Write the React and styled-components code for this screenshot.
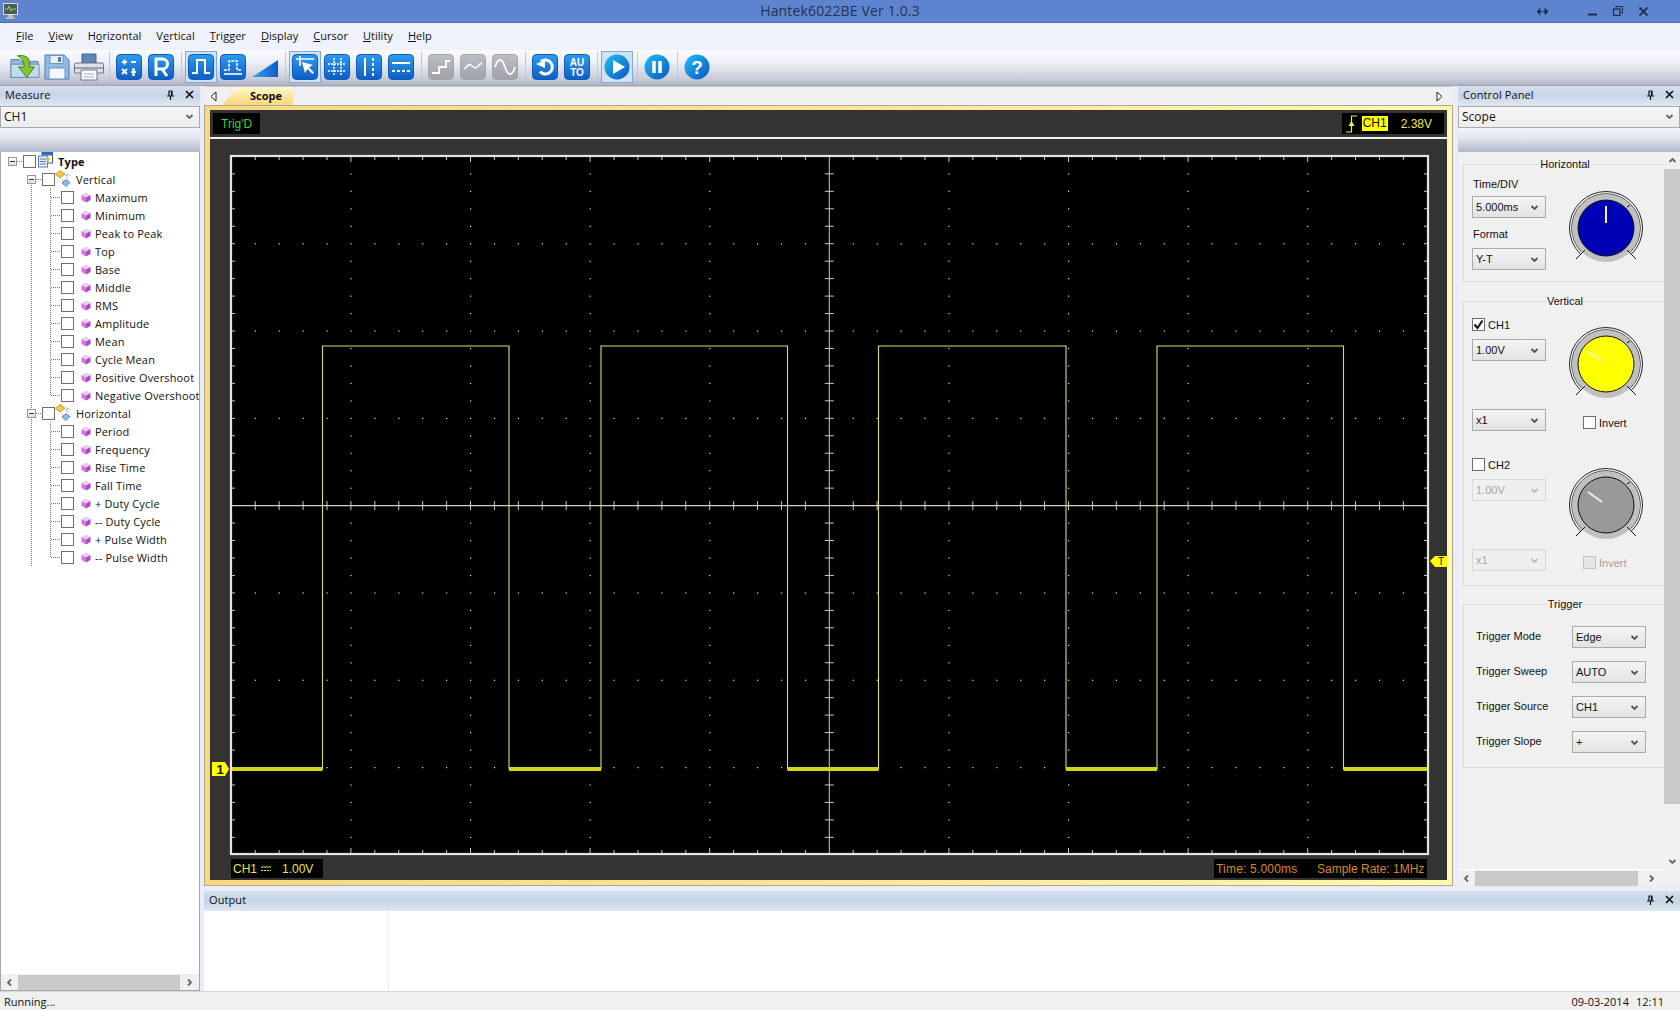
import React from "react";
import styled, { createGlobalStyle } from "styled-components";

const UI = `"Open Sans", "Liberation Sans", sans-serif`;
const ARIAL = `"Liberation Sans", Arial, sans-serif`;

const Global = createGlobalStyle`
  html, body { margin: 0; padding: 0; background: #e9edf9; }
  * { box-sizing: border-box; }
`;

const Window = styled.div`
  width: 1680px; height: 1010px; display: flex; flex-direction: column; overflow: hidden;
  font-family: ${UI}; font-size: 11px; color: #111; background: #e9edf9;
`;
const TitleBar = styled.div`
  height: 23px; flex: none; background: #5e83cf; border-bottom: 1px solid #4f6ea8;
  display: grid; grid-template-columns: 1fr auto 1fr; align-items: center;
`;
const AppIcon = styled.div` padding-left: 3px; display: flex; align-items: center; `;
const Title = styled.div` font-size: 14px; color: #26344f; line-height: 22px; letter-spacing: 0.15px; `;
const WinControls = styled.div`
  display: flex; justify-content: flex-end; align-items: center; padding-right: 32px; gap: 16px; color: #1d2c4a;
`;
const ResizeIcon = styled.span` margin-right: 24px; display: flex; `;

const MenuBar = styled.nav`
  height: 27px; flex: none; background: #f0f2fb; display: flex; align-items: center; padding: 0 0 3px 16px; gap: 15px;
`;
const MenuItem = styled.span`
  font-size: 11px; color: #111; letter-spacing: 0.03px;
  u { text-underline-offset: 1px; }
`;
const Toolbar = styled.div`
  height: 36px; flex: none; display: flex; align-items: center; padding: 0 0 2px 9px;
  background: linear-gradient(#fbfbfe 0%, #eef0f7 35%, #c6c8d6 85%, #b0b3c5 100%);
  border-bottom: 1px solid #a3a5b4;
`;
const ToolBtn = styled.div`
  width: 32px; height: 32px; display: flex; align-items: center; justify-content: center;
  border: 1px solid ${(p) => (p.$active ? "#7fa9d9" : "transparent")};
  background: ${(p) => (p.$active ? "#cfe2f7" : "transparent")};
`;
const ToolSep = styled.div`
  width: 1px; height: 30px; margin: 0 3.5px 0 3.5px; background: #c4c6d2;
`;

const Main = styled.div` flex: 1; min-height: 0; display: flex; `;
const SidePanel = styled.aside`
  width: ${(p) => p.$w}px; flex: none; display: flex; flex-direction: column;
`;
const PanelHeader = styled.div`
  height: 20px; flex: none; display: flex; align-items: center; justify-content: space-between;
  padding: 0 6px 3px 5px; font-size: 11px; color: #111;
  background: linear-gradient(#d5dfed 0%, #c6d4e6 45%, #dfe7f2 100%);
`;
const PanelTitle = styled.span` letter-spacing: 0.1px; `;
const PanelTools = styled.span` display: flex; align-items: center; gap: 10px; `;
const PanelCombo = styled.div`
  height: 22px; flex: none; border: 1px solid #a9a9a9; display: flex; align-items: center; justify-content: space-between;
  padding: 0 5px 2px 3px; font-size: 12px; background: linear-gradient(#f6f6f6, #ececec);
`;
const Band = styled.div`
  height: 24px; flex: none; background: linear-gradient(#f3f4fb 0%, #e4e6f0 40%, #b4b7ca 100%);
`;
const TreeBox = styled.div`
  flex: 1; min-height: 0; background: #fff; border-left: 1px solid #a6a6a6; border-right: 1px solid #a6a6a6;
  overflow: hidden;
`;
const TreeGroup = styled.div`
  background-image: repeating-linear-gradient(to bottom, #777 0 1px, transparent 1px 2px);
  background-repeat: no-repeat; background-size: 1px ${(p) => p.$end}px; background-position: 30px 9px;
`;
const TreeChildren = styled.div`
  background-image: repeating-linear-gradient(to bottom, #777 0 1px, transparent 1px 2px);
  background-repeat: no-repeat; background-size: 1px calc(100% - 9px); background-position: 49px 0;
`;
const TreeRow = styled.div`
  height: 18px; display: flex; align-items: center; padding-left: ${(p) => p.$indent}px; white-space: nowrap;
`;
const Expander = styled.span`
  width: 9px; height: 9px; border: 1px solid #999; display: flex; align-items: center; justify-content: center;
  background: linear-gradient(#fff, #ddd); flex: none;
  &::before { content: ""; width: 5px; height: 1px; background: #333; }
`;
const Stub = styled.span`
  width: ${(p) => p.$w}px; height: 1px; flex: none;
  background: repeating-linear-gradient(to right, #777 0 1px, transparent 1px 2px);
`;
const CheckBox = styled.span`
  width: 13px; height: 13px; flex: none; border: 1px solid ${(p) => (p.$disabled ? "#c2c2c2" : "#6f6f6f")};
  background: ${(p) => (p.$disabled ? "#e6e6e6" : "#fff")};
  display: inline-flex; align-items: center; justify-content: center;
`;
const TreeLabel = styled.span`
  font-size: 11px; letter-spacing: 0.16px; margin-left: ${(p) => p.$ml}px; font-weight: ${(p) => (p.$bold ? 700 : 400)}; color: #111;
`;
const ScrollH = styled.div`
  height: 16px; flex: none; display: flex; align-items: center; background: #f0f0f0;
`;
const ScrollArrow = styled.span`
  width: ${(p) => p.$w}px; height: 100%; flex: none; display: flex; align-items: center; justify-content: center;
`;
const ThumbH = styled.span` width: ${(p) => p.$w}px; height: 15px; background: #c9c9c9; flex: none; `;
const ScrollFrame = styled.div`
  border-left: 1px solid #a6a6a6; border-right: 1px solid #a6a6a6; border-bottom: 1px solid #a6a6a6; flex: none;
`;

const CenterArea = styled.div` flex: 1; min-width: 0; display: flex; flex-direction: column; padding-left: 4px; `;
const TopRow = styled.div` height: 800px; flex: none; display: flex; gap: 5px; `;
const ScopeCol = styled.section` width: 1249px; flex: none; display: flex; flex-direction: column; `;
const TabBar = styled.div`
  height: 19px; flex: none; background: #f0f0f0; display: flex; align-items: flex-end; padding-left: 3px;
  border-top: 1px solid #c9cad4;
`;
const TabArrow = styled.span`
  width: 12px; height: 100%; display: flex; align-items: center; justify-content: center; flex: none;
  margin-right: ${(p) => p.$mr}px;
`;
const Tab = styled.div`
  width: 71px; height: 18px; font-weight: 700; font-size: 11px; color: #111; text-align: right; padding-right: 11px; line-height: 17px;
  background: linear-gradient(#fffbd0 0%, #fbe49a 55%, #f8d77e 100%);
  clip-path: polygon(0 100%, 17px 0, calc(100% - 3px) 0, 100% 3px, 100% 100%);
`;
const TabSpacer = styled.span` flex: 1; `;
const Frame = styled.div`
  height: 781px; flex: none; padding: 4px 5px 5px 5px; border: 1px solid #b1a98f;
  background: linear-gradient(to right, #f6d880 0%, #fae59a 50%, #fff9ae 100%);
`;
const Dark = styled.div` height: 770px; background: #333; display: flex; flex-direction: column; border: 0; `;
const ScopeTop = styled.div`
  height: 29px; flex: none; display: flex; justify-content: space-between; padding: 3px 3px 0;
  border-bottom: 2px solid #eee; align-items: flex-start;
`;
const ReadoutBox = styled.div`
  height: 21px; background: #000; display: flex; align-items: center; font-family: ${ARIAL}; font-size: 12px;
  color: ${(p) => p.$color}; padding: 0 ${(p) => p.$pad || 0}px;
`;
const Highlight = styled.span` background: #ffff00; color: #111; padding: 0 1px; height: 15px; line-height: 15px; margin-left: 5px; `;
const TrigValue = styled.span` margin-left: 13px; margin-right: 8px; `;
const Plot = styled.svg` display: block; flex: none; `;
const ScopeBottom = styled.div`
  height: 23px; flex: none; padding: 2px 20px 0 21px; display: flex; justify-content: space-between; align-items: flex-start;
`;
const BottomBox = styled.div`
  width: ${(p) => p.$w}px; height: 19px; background: #000; display: flex; align-items: center; font-family: ${ARIAL}; font-size: 12px;
  color: ${(p) => p.$color}; padding-left: 2px;
`;
const DcMark = styled.span` display: inline-flex; margin: 0 11px 0 4px; `;
const TimeText = styled.span` width: 101px; flex: none; letter-spacing: 0.2px; `;

const ScrollBody = styled.div` flex: 1; min-height: 0; display: flex; `;
const ScrollContent = styled.div`
  width: 206px; flex: none; background: #f0f0f0; padding: 5px 0 0 5px; font-family: ${ARIAL}; font-size: 11px; color: #111;
  border-bottom: 1px solid #fff; overflow: hidden;
`;
const ScrollV = styled.div` flex: 1; display: flex; flex-direction: column; background: #f0f0f0; `;
const ArrowV = styled.span` height: 17px; display: flex; align-items: center; justify-content: center; flex: none; `;
const ThumbV = styled.span` height: 635px; background: #c9c9c9; flex: none; `;
const VSpace = styled.span` flex: 1; `;

const Group = styled.fieldset`
  margin: ${(p) => p.$mt || 0}px 0 0 0; padding: 0; min-inline-size: 0; width: 203px;
  border: 1px solid #dcdcdc; border-right: none; 
`;
const Legend = styled.legend`
  margin: 0 auto; padding: 0 1px; font-size: 11px; line-height: 14px; height: 14px; color: #111;
`;
const TwoCols = styled.div`
  display: grid; grid-template-columns: 74px 80px; column-gap: 20px; padding: 0 0 ${(p) => p.$pb}px 8px;
`;
const Col = styled.div` display: flex; flex-direction: column; align-items: flex-start; `;
const Label = styled.div` line-height: 14px; margin-top: ${(p) => p.$mt}px; padding-left: 1px; `;
const Combo = styled.div`
  width: 74px; height: 22px; flex: none; margin-top: ${(p) => p.$mt || 0}px; display: flex; align-items: center; justify-content: space-between;
  padding: 0 6px 0 3px; border: 1px solid ${(p) => (p.$disabled ? "#d9d9d9" : "#ababab")};
  background: ${(p) => (p.$disabled ? "#efefef" : "linear-gradient(#f4f4f4, #e3e3e3)")};
  color: ${(p) => (p.$disabled ? "#a8a8a8" : "#111")}; font-size: 11px;
`;
const CheckRow = styled.label`
  display: flex; align-items: center; height: 13px; margin-top: ${(p) => p.$mt || 0}px; padding-left: ${(p) => p.$pl || 0}px; gap: 3px;
  color: ${(p) => (p.$disabled ? "#a0a0a0" : "#111")};
`;
const KnobWrap = styled.svg` display: block; margin-top: ${(p) => p.$mt}px; flex: none; `;
const TriggerBody = styled.div` padding: 15px 0 14px 12px; display: flex; flex-direction: column; gap: 13px; `;
const TriggerRow = styled.div` display: flex; align-items: center; `;
const TriggerLabel = styled.span` width: 96px; flex: none; margin-top: -2px; `;

const Output = styled.section` margin-top: 5px; flex: 1; min-height: 0; display: flex; flex-direction: column; `;
const OutputBody = styled.div` flex: 1; background: #fff; display: flex; `;
const OutputColumn = styled.div` width: 185px; border-right: 1px solid #efefef; `;
const StatusBar = styled.footer`
  height: 19px; flex: none; background: #f0f0f0; border-top: 1px solid #d8d8d8; display: flex; align-items: center;
  justify-content: space-between; padding: 0 16px 0 4px; font-size: 11px; color: #111;
`;
const StatusClock = styled.span` display: flex; gap: 7px; `;

/* ---------- icon drawings ---------- */
const Chev = ({ dir = "down", color = "#666", size = 9 }) => {
  const pts = {
    down: "1.5,3 4.5,6 7.5,3",
    up: "1.5,6 4.5,3 7.5,6",
    left: "6,1.5 3,4.5 6,7.5",
    right: "3,1.5 6,4.5 3,7.5",
  }[dir];
  return (
    <svg width={size} height={size} viewBox="0 0 9 9">
      <polyline points={pts} fill="none" stroke={color} strokeWidth="1.8" />
    </svg>
  );
};
const TabTriangle = ({ right }) => (
  <svg width="7" height="11" viewBox="0 0 7 11">
    <polygon points={right ? "1,1 6,5.5 1,10" : "6,1 1,5.5 6,10"} fill="#fff" stroke="#222" />
  </svg>
);
const Pin = () => (
  <svg width="9" height="10" viewBox="0 0 9 10">
    <path d="M2.5 1h4M3 1v5M6 1v5M1 6h7M4.500 6v4" fill="none" stroke="#111" strokeWidth="1.2" />
    <path d="M5.500 1.500v4" stroke="#111" strokeWidth="1.2" />
  </svg>
);
const Close = () => (
  <svg width="9" height="9" viewBox="0 0 9 9">
    <path d="M1 1l7 7M8 1l-7 7" stroke="#111" strokeWidth="1.6" />
  </svg>
);
const PanelBtns = () => (
  <PanelTools>
    <Pin />
    <Close />
  </PanelTools>
);
const Tick = () => (
  <svg width="11" height="11" viewBox="0 0 11 11">
    <path d="M1.500 5.500l3 3.500 5-7.500" fill="none" stroke="#111" strokeWidth="2" />
  </svg>
);
const Gem = () => (
  <svg width="10" height="11" viewBox="0 0 10 11" style={{ marginLeft: 7, flex: "none" }}>
    <polygon points="5,0.5 9.5,3 5,5.5 0.5,3" fill="#f2c9f4" />
    <polygon points="0.5,3 5,5.5 5,10.5 0.5,8" fill="#d577dc" />
    <polygon points="9.5,3 5,5.5 5,10.5 9.5,8" fill="#a94bc2" />
  </svg>
);
const BranchIcon = () => (
  <svg width="16" height="17" viewBox="0 0 16 17" style={{ marginLeft: 0, flex: "none", marginTop: -2 }}>
    <polygon points="5,0.5 10,4 5,8 0.5,4.500" fill="#f4c93e" stroke="#a5822a" strokeWidth="0.7" />
    <polygon points="11,9.500 15,12.500 11,16.500 7,13" fill="#8cbdee" stroke="#3f6fa8" strokeWidth="0.7" />
    <path d="M11 5l1.500 3.500M7 9.500l2 2.500M12 4l2.500 1.500" stroke="#4a6f96" strokeWidth="1" strokeDasharray="1 1" />
  </svg>
);
const TypeIcon = () => (
  <svg width="15" height="16" viewBox="0 0 15 16" style={{ marginLeft: 2, flex: "none", marginTop: -2 }}>
    <rect x="4" y="0.5" width="10.5" height="10.5" fill="#fff" stroke="#2f5f99" />
    <rect x="4" y="0.5" width="10.5" height="3" fill="#2f6fb6" />
    <rect x="0.5" y="4" width="9" height="11" fill="#e7effa" stroke="#5a7fae" />
    <path d="M2 7h6M2 9.500h6M2 12h6" stroke="#4d79b4" />
    <path d="M10 5v5M7.500 7.500h5" stroke="#f0b429" strokeWidth="1.6" />
  </svg>
);

const Tile = ({ id, grey, children }) => (
  <svg width="26" height="26" viewBox="0 0 26 26">
    <defs>
      <linearGradient id={id} x1="0" y1="0" x2="0" y2="1">
        {grey ? (
          <>
            <stop offset="0" stopColor="#bdbfc6" />
            <stop offset="1" stopColor="#9fa1a9" />
          </>
        ) : (
          <>
            <stop offset="0" stopColor="#2f9bee" />
            <stop offset="1" stopColor="#0e5dc6" />
          </>
        )}
      </linearGradient>
    </defs>
    <rect x="0.5" y="0.5" width="25" height="25" rx="4" fill={`url(#${id})`} stroke={grey ? "#a2a4ac" : "#0f5bb8"} />
    <g fill="none" stroke="#fff" strokeWidth="2" strokeLinejoin="miter">{children}</g>
  </svg>
);
const Round = ({ id, children }) => (
  <svg width="26" height="26" viewBox="0 0 26 26">
    <defs>
      <linearGradient id={id} x1="0" y1="0" x2="1" y2="1">
        <stop offset="0" stopColor="#1fc0f4" />
        <stop offset="1" stopColor="#0b55c0" />
      </linearGradient>
    </defs>
    <circle cx="13" cy="13" r="12.5" fill={`url(#${id})`} />
    {children}
  </svg>
);
const OpenIcon = () => (
  <svg width="32" height="28" viewBox="0 0 32 28">
    <path d="M1 6h9l2 2h18v17H1z" fill="#8db9dc" stroke="#5f7f9a" />
    <path d="M1 11h30v14H1z" fill="#bfdcf2" stroke="#6b8ba6" />
    <path d="M8 2c8-1 12 1 13 7v5h5l-8 11-9-11h6v-3c-1-4-3-7-7-9z" fill="#86c42f" stroke="#3e7d16" />
  </svg>
);
const SaveIcon = () => (
  <svg width="26" height="26" viewBox="0 0 26 26">
    <path d="M1 1h19l5 5v19H1z" fill="#8fbce6" stroke="#4e7cae" />
    <rect x="6" y="1.5" width="13" height="8" fill="#e8f1fa" stroke="#6f94bb" />
    <rect x="14" y="3" width="3" height="5" fill="#4e7cae" />
    <rect x="5" y="14" width="16" height="11" fill="#f4f7fb" stroke="#6f94bb" />
  </svg>
);
const PrintIcon = () => (
  <svg width="30" height="28" viewBox="0 0 30 28">
    <path d="M8 1h14v9H8z" fill="#5f87ba" stroke="#47648a" />
    <path d="M2 10h26a1.500 1.500 0 0 1 1.500 1.500V20h-29v-8.500A1.500 1.500 0 0 1 2 10z" fill="#dde1e8" stroke="#70778a" />
    <path d="M1 15h28" stroke="#9aa2b0" strokeWidth="2" />
    <path d="M7 17h16v10H7z" fill="#fafbfd" stroke="#70778a" />
    <path d="M10 21h10M10 24h10" stroke="#aab0bb" />
  </svg>
);
const ToolbarRow = () => (
  <Toolbar>
    <ToolBtn><OpenIcon /></ToolBtn>
    <ToolBtn><SaveIcon /></ToolBtn>
    <ToolBtn><PrintIcon /></ToolBtn>
    <ToolSep />
    <ToolBtn>
      <Tile id="t-calc">
        <path d="M6 8h5M8.500 5.500v5M15 8h5M6 15l5 5M11 15l-5 5M15 18h5" strokeWidth="1.8" />
        <circle cx="17.5" cy="15.5" r="0.6" fill="#fff" />
        <circle cx="17.5" cy="20.5" r="0.6" fill="#fff" />
      </Tile>
    </ToolBtn>
    <ToolBtn>
      <Tile id="t-r">
        <path d="M8 22V5h6.500a4.500 4.500 0 0 1 0 10H8M14 15l5 7" strokeWidth="3" />
      </Tile>
    </ToolBtn>
    <ToolSep />
    <ToolBtn $active>
      <Tile id="t-pulse"><path d="M4 19h5V6h8v13h5" /></Tile>
    </ToolBtn>
    <ToolBtn>
      <Tile id="t-pulse2">
        <path d="M4 16h5V7h8v9h5" strokeWidth="1.5" strokeDasharray="3 1" />
        <path d="M4 20h18" strokeWidth="1.6" />
      </Tile>
    </ToolBtn>
    <ToolBtn>
      <svg width="26" height="26" viewBox="0 0 26 26">
        <defs>
          <linearGradient id="t-ramp" x1="0" y1="0" x2="1" y2="0">
            <stop offset="0" stopColor="#39a6f0" />
            <stop offset="1" stopColor="#0c5cc6" />
          </linearGradient>
        </defs>
        <polygon points="0,23 26,6 26,23" fill="url(#t-ramp)" />
      </svg>
    </ToolBtn>
    <ToolSep />
    <ToolBtn $active>
      <Tile id="t-cur">
        <path d="M4 5h18M8 2v10" strokeWidth="1.6" />
        <path d="M10 8l3 11 2.500-4 5 5 1.500-1.500-5-5 4-2.500z" fill="#fff" stroke="none" />
      </Tile>
    </ToolBtn>
    <ToolBtn>
      <Tile id="t-grid">
        <path d="M4 10h18M4 17h18M10 4v18M17 4v18" strokeWidth="1.5" strokeDasharray="2 1" />
      </Tile>
    </ToolBtn>
    <ToolBtn>
      <Tile id="t-v">
        <path d="M9 4v18" />
        <path d="M17 4v18" strokeDasharray="3 2" />
      </Tile>
    </ToolBtn>
    <ToolBtn>
      <Tile id="t-h">
        <path d="M4 9h18" />
        <path d="M4 17h18" strokeDasharray="3 2" />
      </Tile>
    </ToolBtn>
    <ToolSep />
    <ToolBtn>
      <Tile id="t-g1" grey><path d="M4 19h7v-6h7V7h4" strokeWidth="1.8" /></Tile>
    </ToolBtn>
    <ToolBtn>
      <Tile id="t-g2" grey><path d="M4 15c3-2 5-6 7-4s4 4 6 2 3-3 5-4" strokeWidth="1.5" /></Tile>
    </ToolBtn>
    <ToolBtn>
      <Tile id="t-g3" grey><path d="M3 13C6 3 10 4 13 13s7 10 10 0" strokeWidth="1.8" /></Tile>
    </ToolBtn>
    <ToolSep />
    <ToolBtn>
      <Tile id="t-undo">
        <path d="M9 7.500a7 7 0 1 1-1 10" strokeWidth="3" />
        <polygon points="4,10 13,6 13,14" fill="#fff" stroke="none" />
      </Tile>
    </ToolBtn>
    <ToolBtn>
      <Tile id="t-auto">
        <g fill="#fff" stroke="none" fontFamily={ARIAL} fontWeight="700" fontSize="10" textAnchor="middle">
          <text x="13" y="11.5">AU</text>
          <text x="13" y="22">TO</text>
        </g>
      </Tile>
    </ToolBtn>
    <ToolSep />
    <ToolBtn $active>
      <Round id="t-play"><polygon points="9,6 21,13 9,20" fill="#fff" /></Round>
    </ToolBtn>
    <ToolSep />
    <ToolBtn>
      <Round id="t-pause"><path d="M10 7v12M16 7v12" stroke="#fff" strokeWidth="3.5" /></Round>
    </ToolBtn>
    <ToolSep />
    <ToolBtn>
      <Round id="t-help">
        <text x="13" y="20" textAnchor="middle" fontFamily={ARIAL} fontWeight="700" fontSize="19" fill="#fff">?</text>
      </Round>
    </ToolBtn>
  </Toolbar>
);

const Knob = ({ color, needle, mt }) => {
  const cx = 40, cy = 40;
  const arc = (r) => {
    const d = r * Math.SQRT1_2;
    return `M${cx - d} ${cy + d}A${r} ${r} 0 1 1 ${cx + d} ${cy + d}`;
  };
  return (
    <KnobWrap $mt={mt} width="80" height="80" viewBox="0 0 80 80">
      <path d={arc(36.5)} fill="none" stroke="#111" strokeWidth="0.9" />
      <path d={arc(34.2)} fill="none" stroke="#111" strokeWidth="0.9" />
      <circle cx={cx} cy={cy} r="34" fill="#c0c0c0" />
      <circle cx={cx} cy={cy} r="28" fill={color} stroke="#111" strokeWidth="1" />
      <path d="M10 71l9-9M70 71l-9-9M61 19l3-2" stroke="#111" strokeWidth="1" />
      <line x1={cx + needle[0]} y1={cy + needle[1]} x2={cx + needle[2]} y2={cy + needle[3]} stroke="#f3efc8" strokeWidth="2" />
    </KnobWrap>
  );
};

const ox = 210, oy = 139;
const cxP = 829.3, cyP = 505.6, dx = 23.92, dy = 17.46;
const edges = [322.5, 509, 601, 787.5, 878.5, 1066, 1157, 1343.5];
const hi = 346, lo = 769;
const L = 231, R = 1428, TOP = 156, BOT = 854;

const ScopePlot = () => {
  const dots = [], lines = [];
  for (let i = -25; i <= 25; i++) {
    const x = cxP + i * dx;
    if (x < L + 1 || x > R - 1) continue;
    const major = i % 5 === 0;
    if (i !== 0) {
      lines.push(`M${x} ${TOP + 1}v${major ? 5 : 3}M${x} ${BOT - 1}v-${major ? 5 : 3}`);
      lines.push(`M${x} ${cyP - 4.5}v9`);
    }
    if (i === 0) lines.push(`M${x} ${TOP + 1}v${BOT - TOP - 2}`);
    for (let j = -20; j <= 20; j++) {
      const y = cyP + j * dy;
      if (y < TOP + 3 || y > BOT - 3) continue;
      if (i === 0 || j === 0) continue;
      if (major || j % 5 === 0) dots.push([x, y]);
    }
  }
  for (let j = -19; j <= 19; j++) {
    const y = cyP + j * dy;
    if (j !== 0) {
      lines.push(`M${L + 1} ${y}h3M${R - 1} ${y}h-3`);
      lines.push(`M${cxP - 4.5} ${y}h9`);
    }
  }
  let wave = `M${L + 1} ${lo}`;
  edges.forEach((x, i) => {
    wave += `H${x}V${i % 2 === 0 ? hi : lo}`;
  });
  wave += `H${R - 1}`;
  const lows = [[L + 1, edges[0]], [edges[1], edges[2]], [edges[3], edges[4]], [edges[5], edges[6]], [edges[7], R - 1]];
  return (
    <Plot width="1237" height="718" viewBox={`${ox} ${oy} 1237 718`}>
      <rect x={L} y={TOP} width={R - L} height={BOT - TOP} fill="#000" stroke="#e4e4e4" strokeWidth="2.2" />
      <path d={lines.join("")} stroke="#c8c8c8" strokeWidth="1" fill="none" />
      <path d={`M${L + 1} ${cyP}H${R - 1}`} stroke="#d0d0d0" strokeWidth="1.2" />
      {dots.map(([x, y], i) => (
        <rect key={i} x={x - 0.5} y={y - 0.5} width="1.2" height="1.2" fill="#dedede" />
      ))}
      <path d={wave} fill="none" stroke="#dcdc6c" strokeWidth="1.1" />
      {lows.map(([a, b], i) => (
        <rect key={i} x={a} y={lo - 2} width={b - a} height="4" fill="#d4d41e" />
      ))}
      <polygon points="212,762 225,762 229,769 225,776 212,776" fill="#ffff00" />
      <text x="220" y="774" textAnchor="middle" fontFamily={ARIAL} fontWeight="700" fontSize="13" fill="#111">1</text>
      <polygon points="1430,561 1435,556 1447,556 1447,567 1435,567" fill="#ffff00" />
      <text x="1441" y="565" textAnchor="middle" fontFamily={ARIAL} fontSize="10" fill="#111">T</text>
    </Plot>
  );
};

const vertical = ["Maximum", "Minimum", "Peak to Peak", "Top", "Base", "Middle", "RMS", "Amplitude", "Mean", "Cycle Mean", "Positive Overshoot", "Negative Overshoot"];
const horizontal = ["Period", "Frequency", "Rise Time", "Fall Time", "+ Duty Cycle", "-- Duty Cycle", "+ Pulse Width", "-- Pulse Width"];

const Leaf = ({ name }) => (
  <TreeRow $indent={50}>
    <Stub $w={10} />
    <CheckBox />
    <Gem />
    <TreeLabel $ml={4}>{name}</TreeLabel>
  </TreeRow>
);
const Branch = ({ name, items }) => (
  <>
    <TreeRow $indent={26}>
      <Expander />
      <Stub $w={6} />
      <CheckBox />
      <BranchIcon />
      <TreeLabel $ml={5}>{name}</TreeLabel>
    </TreeRow>
    <TreeChildren>
      {items.map((n) => (
        <Leaf key={n} name={n} />
      ))}
    </TreeChildren>
  </>
);

const PopCombo = ({ value, mt, disabled }) => (
  <Combo $mt={mt} $disabled={disabled}>
    {value}
    <Chev color={disabled ? "#bcbcbc" : "#555"} />
  </Combo>
);

export default function App() {
  const menus = [["F", "ile"], ["V", "iew"], ["H", "o", "rizontal"], ["V", "e", "rtical"], ["T", "rigger"], ["D", "isplay"], ["C", "ursor"], ["U", "tility"], ["H", "elp"]];
  return (
    <Window>
      <Global />
      <TitleBar>
        <AppIcon>
          <svg width="15" height="16" viewBox="0 0 15 16">
            <rect x="0.5" y="0.5" width="14" height="11" fill="#4d5a52" stroke="#d8dcd8" />
            <path d="M2 6h3l1-3 2 5 1-2h4" fill="none" stroke="#8fe07a" strokeWidth="0.9" />
            <path d="M5 12h5v2H5zM3 14h9v2H3z" fill="#b9bdb9" />
          </svg>
        </AppIcon>
        <Title>Hantek6022BE Ver 1.0.3</Title>
        <WinControls>
          <ResizeIcon>
            <svg width="11" height="9" viewBox="0 0 11 9">
              <path d="M0 4.500h11M0 4.500l3-3v6zM11 4.500l-3-3v6z" fill="#1d2c4a" stroke="#1d2c4a" strokeWidth="0.8" />
            </svg>
          </ResizeIcon>
          <svg width="9" height="9" viewBox="0 0 9 9"><path d="M0 7.500h9" stroke="#1d2c4a" strokeWidth="2" /></svg>
          <svg width="10" height="10" viewBox="0 0 10 10">
            <path d="M3 2V.5h6.500V7H8" fill="none" stroke="#1d2c4a" />
            <rect x="0.5" y="3" width="6.5" height="6.5" fill="none" stroke="#1d2c4a" strokeWidth="1.2" />
          </svg>
          <svg width="9" height="9" viewBox="0 0 9 9"><path d="M.5.500l8 8M8.500.500l-8 8" stroke="#1d2c4a" strokeWidth="1.8" /></svg>
        </WinControls>
      </TitleBar>

      <MenuBar>
        {menus.map((m, i) => (
          <MenuItem key={i}>
            {m.length === 3 ? (
              <>
                {m[0]}
                <u>{m[1]}</u>
                {m[2]}
              </>
            ) : (
              <>
                <u>{m[0]}</u>
                {m[1]}
              </>
            )}
          </MenuItem>
        ))}
      </MenuBar>

      <ToolbarRow />

      <Main>
        <SidePanel $w={200}>
          <PanelHeader>
            <PanelTitle>Measure</PanelTitle>
            <PanelBtns />
          </PanelHeader>
          <PanelCombo>
            CH1
            <Chev />
          </PanelCombo>
          <Band />
          <TreeBox>
            <TreeRow $indent={7}>
              <Expander />
              <Stub $w={6} />
              <CheckBox />
              <TypeIcon />
              <TreeLabel $ml={5} $bold>Type</TreeLabel>
            </TreeRow>
            <TreeGroup $end={396}>
              <Branch name="Vertical" items={vertical} />
              <Branch name="Horizontal" items={horizontal} />
            </TreeGroup>
          </TreeBox>
          <ScrollFrame>
            <ScrollH>
              <ScrollArrow $w={17}><Chev dir="left" /></ScrollArrow>
              <ThumbH $w={162} />
              <ScrollArrow $w={19}><Chev dir="right" /></ScrollArrow>
            </ScrollH>
          </ScrollFrame>
        </SidePanel>

        <CenterArea>
          <TopRow>
            <ScopeCol>
              <TabBar>
                <TabArrow $mr={3}><TabTriangle /></TabArrow>
                <Tab>Scope</Tab>
                <TabSpacer />
                <TabArrow $mr={8}><TabTriangle right /></TabArrow>
              </TabBar>
              <Frame>
                <Dark>
                  <ScopeTop>
                    <ReadoutBox $color="#33d633" $pad={8}>Trig'D</ReadoutBox>
                    <ReadoutBox $color="#f0e93a" $pad={4}>
                      <svg width="11" height="18" viewBox="0 0 11 18">
                        <path d="M0 17h5.500V1H11" fill="none" stroke="#f4f030" strokeWidth="1.2" />
                        <polygon points="5.5,6 8.5,11 2.5,11" fill="#f4f030" />
                      </svg>
                      <Highlight>CH1</Highlight>
                      <TrigValue>2.38V</TrigValue>
                    </ReadoutBox>
                  </ScopeTop>
                  <ScopePlot />
                  <ScopeBottom>
                    <BottomBox $w={92} $color="#e6e63c">
                      CH1
                      <DcMark>
                        <svg width="10" height="6" viewBox="0 0 10 6">
                          <path d="M0 1h10" stroke="#e6e63c" />
                          <path d="M0 4.500h10" stroke="#e6e63c" strokeDasharray="2 1" />
                        </svg>
                      </DcMark>
                      1.00V
                    </BottomBox>
                    <BottomBox $w={213} $color="#d98a22">
                      <TimeText>Time: 5.000ms</TimeText>
                      Sample Rate: 1MHz
                    </BottomBox>
                  </ScopeBottom>
                </Dark>
              </Frame>
            </ScopeCol>

            <SidePanel $w={222}>
              <PanelHeader>
                <PanelTitle>Control Panel</PanelTitle>
                <PanelBtns />
              </PanelHeader>
              <PanelCombo>
                Scope
                <Chev />
              </PanelCombo>
              <Band />
              <ScrollBody>
                <ScrollContent>
                  <Group>
                    <Legend>Horizontal</Legend>
                    <TwoCols $pb={11}>
                      <Col>
                        <Label $mt={6}>Time/DIV</Label>
                        <PopCombo value="5.000ms" mt={5} />
                        <Label $mt={9}>Format</Label>
                        <PopCombo value="Y-T" mt={7} />
                      </Col>
                      <Col>
                        <Knob color="#0000b4" needle={[0, -22, 0, -5]} mt={17} />
                      </Col>
                    </TwoCols>
                  </Group>
                  <Group $mt={12}>
                    <Legend>Vertical</Legend>
                    <TwoCols $pb={14}>
                      <Col>
                        <CheckRow $mt={10}>
                          <CheckBox><Tick /></CheckBox>
                          CH1
                        </CheckRow>
                        <PopCombo value="1.00V" mt={8} />
                        <PopCombo value="x1" mt={48} />
                        <CheckRow $mt={27}>
                          <CheckBox />
                          CH2
                        </CheckRow>
                        <PopCombo value="1.00V" mt={8} disabled />
                        <PopCombo value="x1" mt={48} disabled />
                      </Col>
                      <Col>
                        <Knob color="#ffff00" needle={[-18, -13, -4, -3]} mt={16} />
                        <CheckRow $mt={12} $pl={17}>
                          <CheckBox />
                          Invert
                        </CheckRow>
                        <Knob color="#999999" needle={[-18, -13, -4, -3]} mt={36} />
                        <CheckRow $mt={11} $pl={17} $disabled>
                          <CheckBox $disabled />
                          Invert
                        </CheckRow>
                      </Col>
                    </TwoCols>
                  </Group>
                  <Group $mt={11}>
                    <Legend>Trigger</Legend>
                    <TriggerBody>
                      {[["Trigger Mode", "Edge"], ["Trigger Sweep", "AUTO"], ["Trigger Source", "CH1"], ["Trigger Slope", "+"]].map(([l, v]) => (
                        <TriggerRow key={l}>
                          <TriggerLabel>{l}</TriggerLabel>
                          <PopCombo value={v} />
                        </TriggerRow>
                      ))}
                    </TriggerBody>
                  </Group>
                </ScrollContent>
                <ScrollV>
                  <ArrowV><Chev dir="up" /></ArrowV>
                  <ThumbV />
                  <VSpace />
                  <ArrowV><Chev dir="down" /></ArrowV>
                </ScrollV>
              </ScrollBody>
              <ScrollH>
                <ScrollArrow $w={17}><Chev dir="left" /></ScrollArrow>
                <ThumbH $w={163} />
                <ScrollArrow $w={26}><Chev dir="right" /></ScrollArrow>
              </ScrollH>
            </SidePanel>
          </TopRow>

          <Output>
            <PanelHeader>
              <PanelTitle>Output</PanelTitle>
              <PanelBtns />
            </PanelHeader>
            <OutputBody>
              <OutputColumn />
            </OutputBody>
          </Output>
        </CenterArea>
      </Main>

      <StatusBar>
        <span>Running...</span>
        <StatusClock>
          <span>09-03-2014</span>
          <span>12:11</span>
        </StatusClock>
      </StatusBar>
    </Window>
  );
}
